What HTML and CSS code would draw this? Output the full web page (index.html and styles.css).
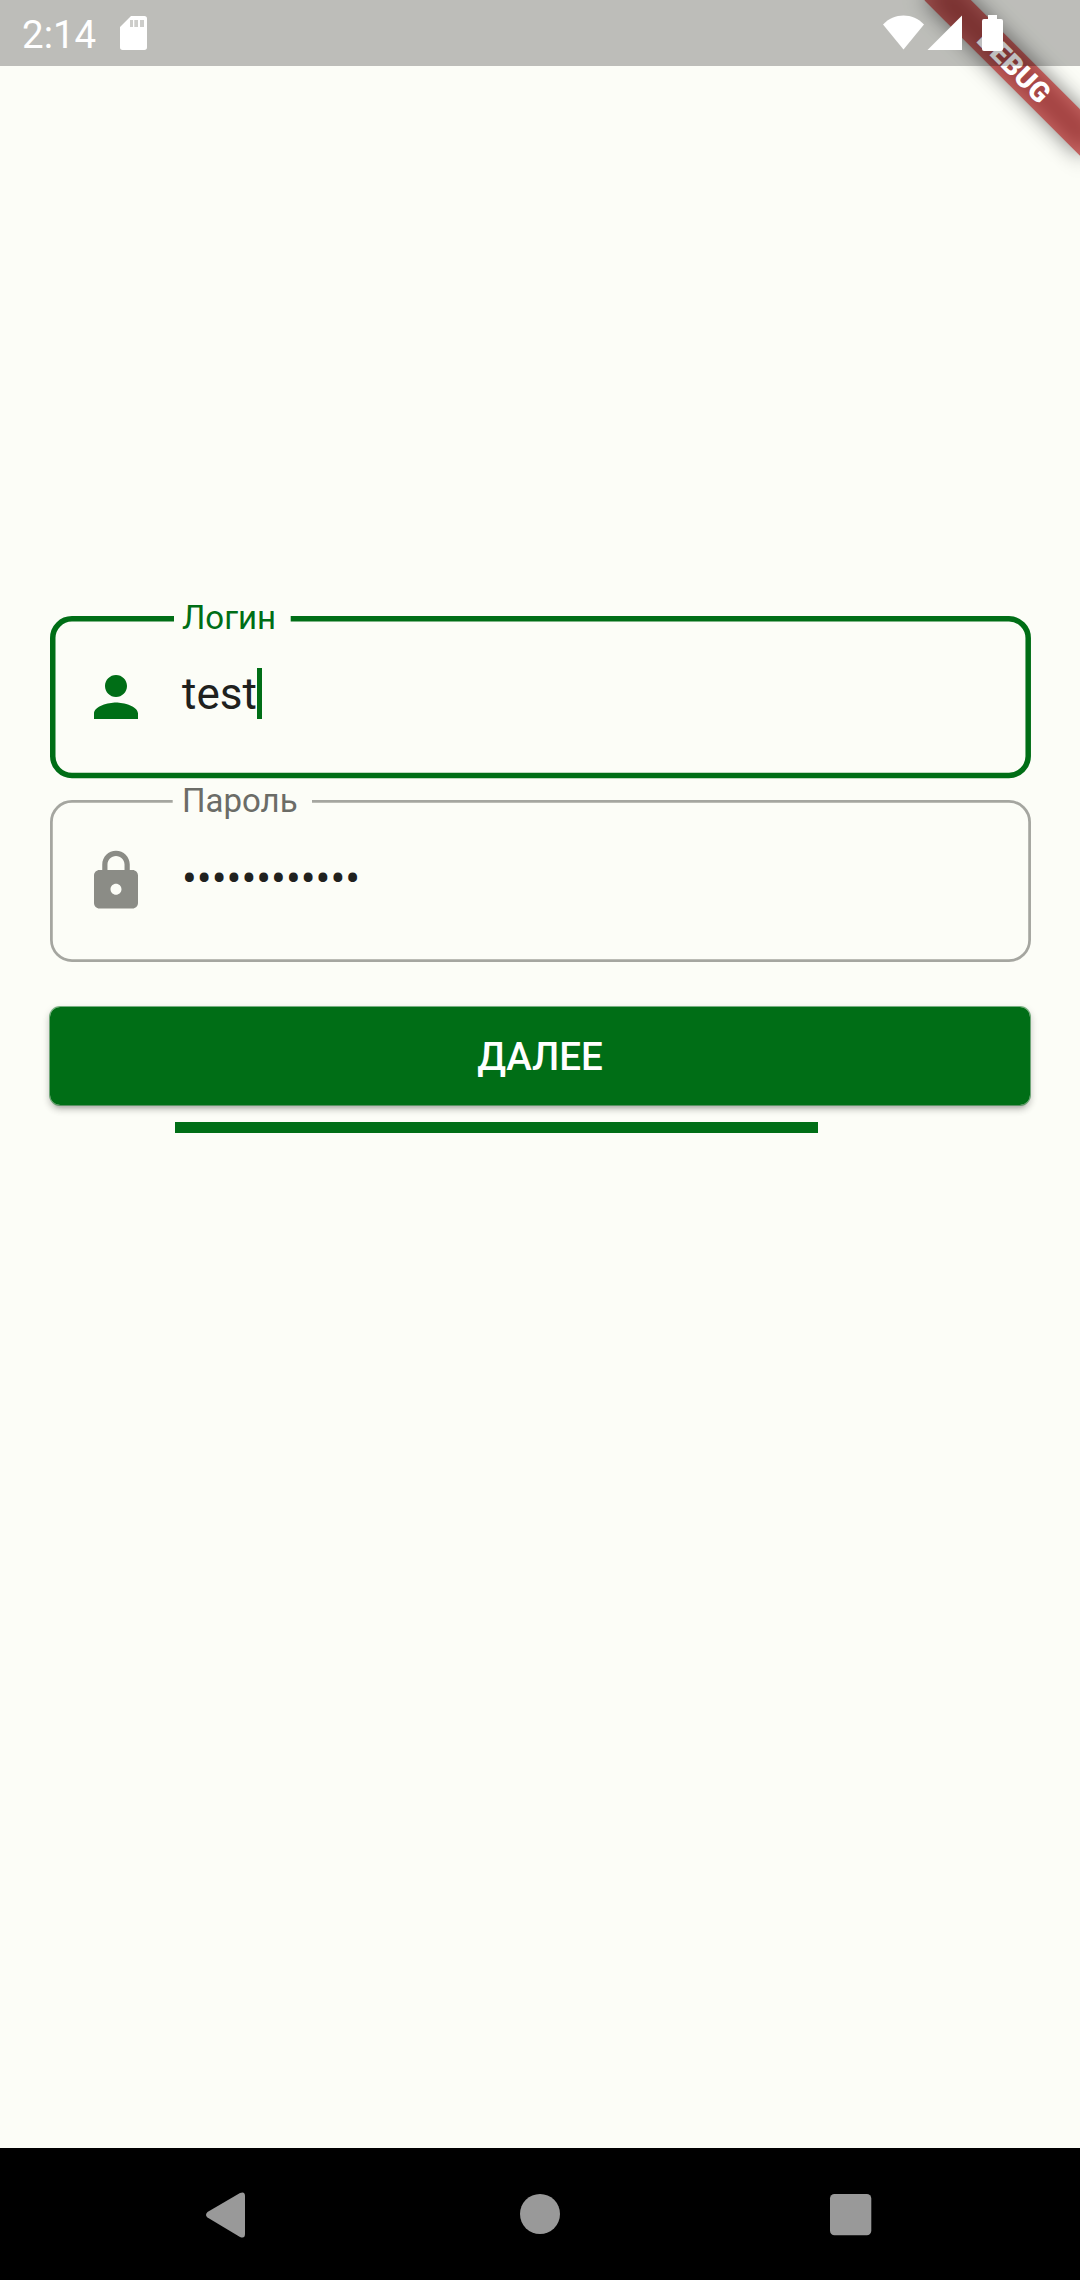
FILE: index.html
```html
<!DOCTYPE html>
<html lang="ru">
<head>
<meta charset="utf-8">
<title>Вход</title>
<link rel="stylesheet" href="styles.css">
</head>
<body>
<div class="screen">
  <header class="status">
    <span class="time">2:14</span>
    <svg class="sd" width="28" height="36" viewBox="0 0 28 36"><path fill="#fff" fill-rule="evenodd" d="M11 1H24.3Q27 1 27 3.7V32.3Q27 35 24.3 35H2.7Q0 35 0 32.3V12ZM10 5V12H13V5ZM14.3 5V12H18V5ZM20 5V12H24V5Z"/><path fill="#fff" fill-opacity=".25" d="M10 5h14v7H10z"/></svg>
    <svg class="signals" width="122" height="38" viewBox="0 0 122 38" fill="#fff">
      <path d="M0 10.5C11 -1.5 30 -1.5 41 10.5L20.5 35.5Z"/>
      <path d="M44.5 36L79 1.5V36Z"/>
      <path d="M105 1H114V5H118Q120 5 120 7V35Q120 37 118 37H101Q99 37 99 35V7Q99 5 101 5H105Z"/>
    </svg>
  </header>
  <div class="banner"><div class="ribbon"><span>DEBUG</span></div></div>

  <main class="form">
    <div class="field active">
      <svg class="outline" width="982" height="163" viewBox="0 0 982 163"><path d="M124 2.85H22A19.2 19.2 0 0 0 2.75 22V140.3A19.2 19.2 0 0 0 22 159.4H959A19.2 19.2 0 0 0 978.2 140.3V22A19.2 19.2 0 0 0 959 2.85H240.7" fill="none" stroke="currentColor" stroke-width="5.5"/></svg>
      <span class="label">Логин</span>
      <div class="row">
        <svg class="icon" width="66" height="66" viewBox="0 0 24 24"><path fill="currentColor" d="M12 12c2.21 0 4-1.79 4-4s-1.79-4-4-4-4 1.79-4 4 1.79 4 4 4zm0 2c-2.67 0-8 1.34-8 4v2h16v-2c0-2.66-5.33-4-8-4z"/></svg>
        <span class="value">test</span><i class="caret"></i>
      </div>
    </div>
    <div class="field">
      <svg class="outline" width="982" height="163" viewBox="0 0 982 163"><path d="M122.7 1.4H22A20.6 20.6 0 0 0 1.4 22V140A20.6 20.6 0 0 0 22 160.6H959A20.6 20.6 0 0 0 979.6 140V22A20.6 20.6 0 0 0 959 1.4H262" fill="none" stroke="#a5a6a0" stroke-width="2.75"/></svg>
      <span class="label">Пароль</span>
      <div class="row">
        <svg class="icon" width="66" height="66" viewBox="0 0 24 24"><path fill="currentColor" d="M18 8h-1V6c0-2.76-2.24-5-5-5S7 3.24 7 6v2H6c-1.1 0-2 .9-2 2v10c0 1.1.9 2 2 2h12c1.1 0 2-.9 2-2V10c0-1.1-.9-2-2-2zm-6 9c-1.1 0-2-.9-2-2s.9-2 2-2 2 .9 2 2-.9 2-2 2zm3.1-9H8.9V6c0-1.71 1.39-3.1 3.1-3.1 1.71 0 3.1 1.39 3.1 3.1v2z"/></svg>
        <span class="value dots">••••••••••••</span>
      </div>
    </div>
    <button class="next" type="button">ДАЛЕЕ</button>
    <div class="progress"></div>
  </main>

  <nav class="nav">
    <svg width="1080" height="132" viewBox="0 0 1080 132" fill="#999">
      <path d="M207.5 64L240 45Q245 43 245 48V86Q245 91 240 89L207.5 69.5Q204.5 67 207.5 64Z"/>
      <circle cx="540" cy="66" r="20"/>
      <rect x="830" y="46" width="41.3" height="41.3" rx="4.5"/>
    </svg>
  </nav>
</div>
</body>
</html>
```

FILE: styles.css
```css
body { margin: 0; }

.screen {
  position: relative;
  display: flex;
  flex-direction: column;
  width: 1080px;
  height: 2280px;
  overflow: hidden;
  background: #fcfdf7;
  color: #20211e;
  font-family: Roboto, sans-serif;
}

.status {
  position: relative;
  z-index: 2;
  display: flex;
  box-sizing: border-box;
  height: 66px;
  padding: 0 75px 0 22px;
  background: rgba(0, 0, 0, .25);
  color: #fff;
}
.time { width: 98px; font-size: 38.5px; line-height: 70px; }
.sd { margin-top: 15px; }
.signals { margin: 14px 0 0 auto; }

.banner {
  position: absolute;
  z-index: 1;
  top: 0;
  right: 0;
  width: 220px;
  height: 220px;
  overflow: hidden;
}
.ribbon {
  position: absolute;
  left: 44px;
  top: 50px;
  width: 220px;
  height: 33px;
  transform: rotate(45deg);
  color: #fff;
  font-size: 28px;
  font-weight: 900;
  line-height: 33px;
  text-align: center;
}
.ribbon::before,
.ribbon::after {
  content: "";
  position: absolute;
  inset: 0;
}
.ribbon::before { background: rgba(0, 0, 0, .5); filter: blur(10.9px); }
.ribbon::after { background: rgba(183, 28, 28, .627); }
.ribbon span { position: relative; z-index: 1; }

.form {
  flex: 1;
  display: flex;
  flex-direction: column;
  padding: 550px 49px 0;
}

.field {
  display: grid;
  height: 163px;
  margin: 0 0 21px 1px;
  color: #8b8c86;
}
.field > * { grid-area: 1 / 1; }
.field.active { color: #006e16; }
.label {
  margin: -19px 0 0 132px;
  color: #6b6c67;
  font-size: 33px;
  line-height: 40px;
}
.active .label { color: inherit; margin-top: -18px; }
.row { display: flex; margin: 48px 0 0 33px; }
.value {
  margin: 1px 0 0 33px;
  color: #20211e;
  font-size: 44px;
  line-height: 58px;
}
.value.dots { margin-top: 2px; }
.caret { width: 5.5px; height: 51px; margin-top: 4px; background: currentColor; }

.next {
  height: 100px;
  margin-top: 22px;
  padding: 0;
  border: 1px solid rgba(0, 110, 22, .5);
  border-radius: 11px;
  background: #006e16 padding-box;
  box-shadow: 0 7px 3px -5px rgba(0, 0, 0, .12), 0 4px 6px rgba(0, 0, 0, .13), 0 3px 8px rgba(0, 0, 0, .1);
  color: #fff;
  font: 500 38.5px/98px Roboto, sans-serif;
  padding-top: 1px;
}
.progress { width: 643px; height: 11px; margin: 16px 0 0 126px; background: #006e16; }

.nav { height: 132px; background: #000; }
```
